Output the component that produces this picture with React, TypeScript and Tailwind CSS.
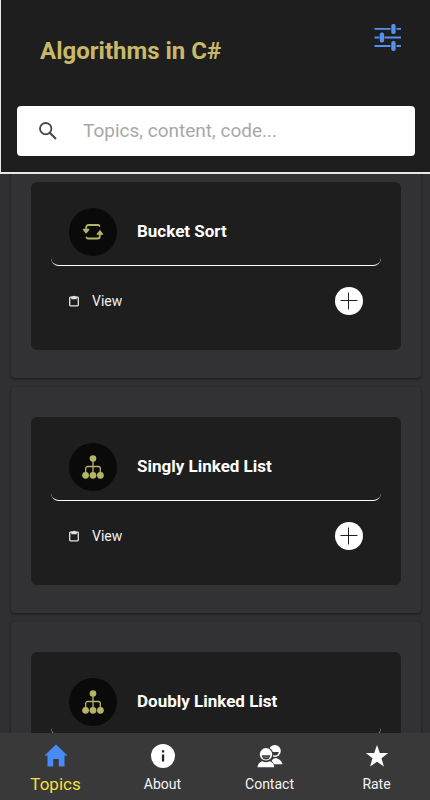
const topics = [
  { name: "Bucket Sort", icon: RepeatIcon },
  { name: "Singly Linked List", icon: TreeIcon },
  { name: "Doubly Linked List", icon: TreeIcon },
]

const tabs = [
  { label: "Topics", icon: HomeIcon, active: true },
  { label: "About", icon: InfoIcon, active: false },
  { label: "Contact", icon: ContactIcon, active: false },
  { label: "Rate", icon: StarIcon, active: false },
]

function OptionsIcon() {
  return (
    <svg width="28" height="28" viewBox="0 0 28 28" fill="#5590f0" aria-hidden="true">
      <path d="M0.500 4h16v1.800h-16zM22.500 4h4.500v1.800h-4.500zM0.500 12.600h5v1.800h-5zM10.500 12.600h16.500v1.800h-16.500zM0.500 21.100h16v1.800h-16zM22.500 21.100h4.500v1.800h-4.500z" />
      <rect x="17.300" y="0" width="4.300" height="10" rx="1.800" />
      <rect x="5.800" y="8.500" width="4.300" height="10" rx="1.800" />
      <rect x="17.300" y="17" width="4.300" height="10" rx="1.800" />
    </svg>
  )
}

function SearchIcon() {
  return (
    <svg width="18" height="18" viewBox="0 0 18 18" fill="none" stroke="#48484a" aria-hidden="true">
      <circle cx="6.700" cy="6.700" r="5.700" strokeWidth="1.800" />
      <path d="M10.800 10.800L17 17" strokeWidth="2.200" />
    </svg>
  )
}

function RepeatIcon() {
  return (
    <svg width="22" height="16" viewBox="0 0 22 16" fill="none" stroke="#b5b566" strokeWidth="1.800" strokeLinecap="round" strokeLinejoin="round" aria-hidden="true">
      <path d="M4.200 6V3.300a2.300 2.300 0 0 1 2.300-2.300H16a1.500 1.500 0 0 1 1.500 1" />
      <path d="M17.800 10v2.200a2.300 2.300 0 0 1-2.300 2.300H6a1.500 1.500 0 0 1-1.500-1" />
      <path d="M1.500 5.500H6.700L4.100 8.800z" fill="#b5b566" strokeWidth="1.300" />
      <path d="M15.300 10.200H20.500L17.900 6.800z" fill="#b5b566" strokeWidth="1.300" />
    </svg>
  )
}

function TreeIcon() {
  return (
    <svg width="22" height="24" viewBox="0 0 22 24" fill="#b5b566" aria-hidden="true">
      <path d="M11 4v16M3.700 19v-5.500a2 2 0 0 1 2-2h10.600a2 2 0 0 1 2 2V19" fill="none" stroke="#b5b566" strokeWidth="1.300" />
      <circle cx="11" cy="3.500" r="3.300" />
      <circle cx="3.600" cy="20.300" r="3.400" />
      <circle cx="11" cy="20.300" r="3.400" />
      <circle cx="18.400" cy="20.300" r="3.400" />
    </svg>
  )
}

function ClipboardIcon() {
  return (
    <svg width="10" height="12" viewBox="0 0 10 12" aria-hidden="true">
      <rect x="0.700" y="2.200" width="8.600" height="8.600" rx="0.700" fill="none" stroke="#e4e4e8" strokeWidth="1.300" />
      <path d="M2.300 1.500h1.500a1.300 1.300 0 0 1 2.400 0h1.500v2.700H2.300z" fill="#e4e4e8" />
    </svg>
  )
}

function PlusCircleIcon() {
  return (
    <svg width="28" height="28" viewBox="0 0 28 28" aria-hidden="true">
      <circle cx="14" cy="14" r="14" fill="#fff" />
      <path d="M13.500 5.500v17M5.500 13.500h17" stroke="#1e1e1e" strokeWidth="1" />
    </svg>
  )
}

function HomeIcon() {
  return (
    <svg width="24" height="24" viewBox="0 0 24 24" fill="#4a8af4" aria-hidden="true">
      <path d="M12 0.500L0.500 11.500H3.500V22.500H9.200V15H14.800V22.500H20.500V11.500H23.500z" />
    </svg>
  )
}

function InfoIcon() {
  return (
    <svg width="24" height="24" viewBox="0 0 24 24" aria-hidden="true">
      <circle cx="12" cy="12" r="12" fill="#fff" />
      <path d="M10.900 6.300h2.300v2.300h-2.300zM10.900 10.600h2.300v7h-2.300z" fill="#222" />
    </svg>
  )
}

function ContactIcon() {
  return (
    <svg width="26" height="24" viewBox="0 0 26 24" fill="#fff" aria-hidden="true">
      <circle cx="17.800" cy="7" r="6" />
      <path d="M13.500 8h8.300a4.200 4.200 0 0 1-8.300 0z" fill="#393939" />
      <path d="M14 20.300c0-4 2-5.800 5-6.300 3.500 1 6 3 6.500 6.300z" />
      <circle cx="9" cy="10.500" r="7.300" fill="#393939" />
      <path d="M-0.500 24C0 18 4 15.500 9 15.500S17.500 18 18 24z" fill="#393939" />
      <circle cx="9" cy="10.300" r="6.200" />
      <path d="M4.800 11.300h8.400a4.200 4.200 0 0 1-8.400 0z" fill="#393939" />
      <path d="M5.900 12.500h6.200a3.300 2.200 0 0 1-6.200 0z" fill="#777" />
      <path d="M0.500 23.300c0.300-3.500 2.500-5.500 5-6 2 1.200 5 1.200 7 0 2.500 0.500 4.500 2.500 4.800 6z" />
    </svg>
  )
}

function StarIcon() {
  return (
    <svg width="24" height="24" viewBox="0 0 24 24" fill="#fff" aria-hidden="true">
      <path d="M12 1L14.800 9H23.200L16.500 14.200L18.900 22.500L12 17.700L5.100 22.500L7.500 14.200L0.800 9H9.200z" />
    </svg>
  )
}

function TopicCard({ topic }: { topic: (typeof topics)[number] }) {
  return (
    <li className="rounded-sm bg-[#323234] px-5 pt-[30px] pb-7 shadow-[0_1px_3px_rgba(0,0,0,0.5)]">
      <article className="h-[168px] rounded-md bg-[#1e1e1e] px-5 pt-2">
        <div className="flex h-[76px] items-center gap-5 rounded-b-lg border-b border-white pl-[18px] pt-3 pb-1">
          <div className="flex size-12 shrink-0 items-center justify-center rounded-full bg-[#0a0a0a]">
            <topic.icon />
          </div>
          <h2 className="text-[17px] font-bold text-white">{topic.name}</h2>
        </div>
        <div className="flex h-[70px] items-center justify-between px-[18px]">
          <button type="button" className="flex items-center gap-[13px] text-sm text-[#f0f0f0]">
            <ClipboardIcon />
            View
          </button>
          <button type="button" aria-label={"Add " + topic.name}>
            <PlusCircleIcon />
          </button>
        </div>
      </article>
    </li>
  )
}

export default function App() {
  return (
    <div className="flex h-screen flex-col overflow-hidden bg-[#303032] font-['Roboto',sans-serif]">
      <header className="relative z-10 shrink-0 border-b-2 border-l border-[#e8e8e8] bg-[#1e1e1e] pr-[15px] pb-4 pl-4">
        <div className="flex h-[106px] items-start justify-between pr-[13px] pl-[23px]">
          <h1 className="pt-[35px] text-2xl leading-8 font-bold text-[#c8b869]">Algorithms in C#</h1>
          <button type="button" aria-label="Options" className="pt-6">
            <OptionsIcon />
          </button>
        </div>
        <label className="flex h-[50px] items-center gap-[26px] rounded-sm bg-white px-[22px]">
          <SearchIcon />
          <input
            type="search"
            aria-label="Search"
            placeholder="Topics, content, code..."
            className="min-w-0 flex-1 text-[19px] text-gray-800 outline-none placeholder:text-[#a8a8a8]"
          />
        </label>
      </header>

      {/* list is scrolled a little under the header */}
      <main className="min-h-0 flex-1 overflow-y-auto [scrollbar-width:none]">
        <ul className="-mt-[22px] flex flex-col gap-[9px] pr-[9px] pl-[11px]">
          {topics.map((topic) => (
            <TopicCard key={topic.name} topic={topic} />
          ))}
        </ul>
      </main>

      <nav className="relative z-10 grid h-[67px] shrink-0 grid-cols-4 bg-[#393939] pl-[2px]">
        {tabs.map((tab) => (
          <a key={tab.label} href="#" className="flex flex-col items-center pt-[11px]">
            <tab.icon />
            <span
              className={
                tab.active
                  ? "mt-1 text-[17px] leading-6 text-[#f5df3d]"
                  : "mt-1 text-sm leading-6 text-[#f4f4f4]"
              }
            >
              {tab.label}
            </span>
          </a>
        ))}
      </nav>
    </div>
  )
}
